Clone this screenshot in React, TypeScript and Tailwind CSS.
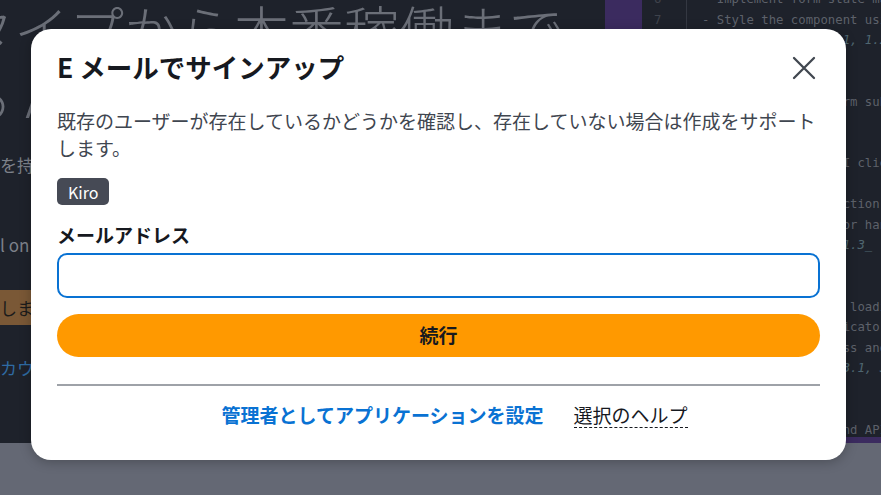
const jp = { fontFamily: '"Noto Sans CJK JP", "Noto Sans", sans-serif' };

interface CodeLine {
  text: string;
  req?: boolean;
}

const codeLines: CodeLine[] = [
  { text: "- Implement form state management" },
  { text: "- Style the component using Tailwind CSS" },
  { text: "- _Requirements: 1.1, 1.2_", req: true },
  { text: "" },
  { text: "" },
  { text: "- Connect to the form submission API" },
  { text: "" },
  { text: "" },
  { text: "- Create the new API client" },
  { text: "" },
  { text: "- Create submit function" },
  { text: "- Implement the error handler" },
  { text: "  - _Requirements: 1.3_", req: true },
  { text: "" },
  { text: "" },
  { text: "- Add spinner while loading state" },
  { text: "- Show progress indicator" },
  { text: "- Display the success and error states" },
  { text: "  - _Requirements: 3.1, 3.2_", req: true },
  { text: "" },
  { text: "" },
  { text: "- Wire up the backend API" },
];

function Hero() {
  return (
    <div className="w-[605px] shrink-0 overflow-hidden flex flex-col" style={jp}>
      <div className="mt-[-5px] ml-[-41px] text-[55px] leading-[66px] font-light text-[#6b6f78] whitespace-nowrap">
        <div>タイプから本番稼働まで</div>
        <div className="ml-[-1px]">る AI エージェント</div>
      </div>
      <div className="mt-[26px] text-[17px] leading-[24px] text-[#7d818a] whitespace-nowrap">
        を持つ開発者のための環境
      </div>
      <div className="mt-[56px] text-[17px] leading-[24px] text-[#7d818a] whitespace-nowrap">
        l on AWS
      </div>
      <div className="mt-[33px] ml-[-24px] w-fit h-[35px] pl-[24px] pr-4 flex items-center rounded bg-[#7a5836] text-[17px] text-[#1b1b1b] whitespace-nowrap">
        しましょう
      </div>
      <div className="mt-[31px] text-[17px] leading-[24px] text-[#2f6ba3] whitespace-nowrap">
        カウントを作成
      </div>
    </div>
  );
}

function CodePanel() {
  return (
    <div className="flex flex-1 min-w-0">
      <div className="w-[37px] shrink-0 bg-[#3b2b5f]" />
      <div className="flex flex-1 min-w-0 flex-col overflow-hidden">
        <div className="flex flex-1 overflow-hidden" style={{ fontFamily: '"DejaVu Sans Mono", monospace' }}>
          <div className="w-[45px] shrink-0 border-r border-[#343842] mt-[-11px] text-[12.3px] text-[#3f434c]">
            {codeLines.map((_, i) => (
              <div key={i} className="h-[20.5px] leading-[20.5px] pl-[12px]">
                {i + 6}
              </div>
            ))}
          </div>
          <div className="flex-1 mt-[-11px] pl-[15px] text-[12.3px] whitespace-pre">
            {codeLines.map((l, i) => (
              <div
                key={i}
                className={
                  l.req
                    ? "h-[20.5px] leading-[20.5px] italic text-[#4f6670]"
                    : "h-[20.5px] leading-[20.5px] text-[#5d616a]"
                }
              >
                {l.text}
              </div>
            ))}
          </div>
        </div>
        <div className="h-[6px] bg-[#3b2b5f]" />
      </div>
    </div>
  );
}

function CloseIcon() {
  return (
    <svg width="24" height="24" viewBox="0 0 24 24" className="mr-[4px] mt-[1px]">
      <path d="M2 2L22 22M22 2L2 22" stroke="#414750" strokeWidth="2.3" strokeLinecap="round" fill="none" />
    </svg>
  );
}

function SignupModal() {
  return (
    <div
      className="absolute left-[31px] top-[29px] w-[815px] h-[431px] bg-white rounded-[20px] shadow-[0_2px_12px_rgba(0,0,0,0.25)] px-[26px] pt-[21px] flex flex-col"
      style={jp}
    >
      <div className="flex items-center justify-between">
        <h2 className="text-[26.5px] leading-[34px] font-bold text-[#16191f]">E メールでサインアップ</h2>
        <CloseIcon />
      </div>
      <p className="mt-[23px] text-[19px] leading-[27px] text-[#3f4650]">
        既存のユーザーが存在しているかどうかを確認し、存在していない場合は作成をサポートします。
      </p>
      <div className="mt-[17px] w-fit h-[27px] px-[11px] flex items-center rounded-[5px] bg-[#464a55] text-[16px] text-white">
        Kiro
      </div>
      <label className="mt-[17px] text-[19px] leading-[26px] font-bold text-[#16191f]">メールアドレス</label>
      <input
        type="email"
        className="mt-[5px] h-[45px] w-full rounded-[10px] border-2 border-[#0972d3] px-3 outline-none"
      />
      <button className="mt-[16px] h-[43px] w-full rounded-full bg-[#ff9900] text-[19px] font-bold text-[#16191f]">
        続行
      </button>
      <div className="mt-[27px] h-[2px] bg-[#9ea2a8]" />
      <div className="mt-[16px] flex justify-center gap-[30px] pl-[32px] text-[19px] leading-[26px]">
        <span className="font-bold text-[#0972d3]">管理者としてアプリケーションを設定</span>
        <span className="text-[#16191f] border-b border-dashed border-[#16191f] leading-[25px]">選択のヘルプ</span>
      </div>
    </div>
  );
}

export default function App() {
  return (
    <div className="relative w-[881px] h-[495px] overflow-hidden bg-[#646874]">
      <div className="flex h-[443px] bg-[#1e222b]">
        <Hero />
        <CodePanel />
      </div>
      <SignupModal />
    </div>
  );
}
